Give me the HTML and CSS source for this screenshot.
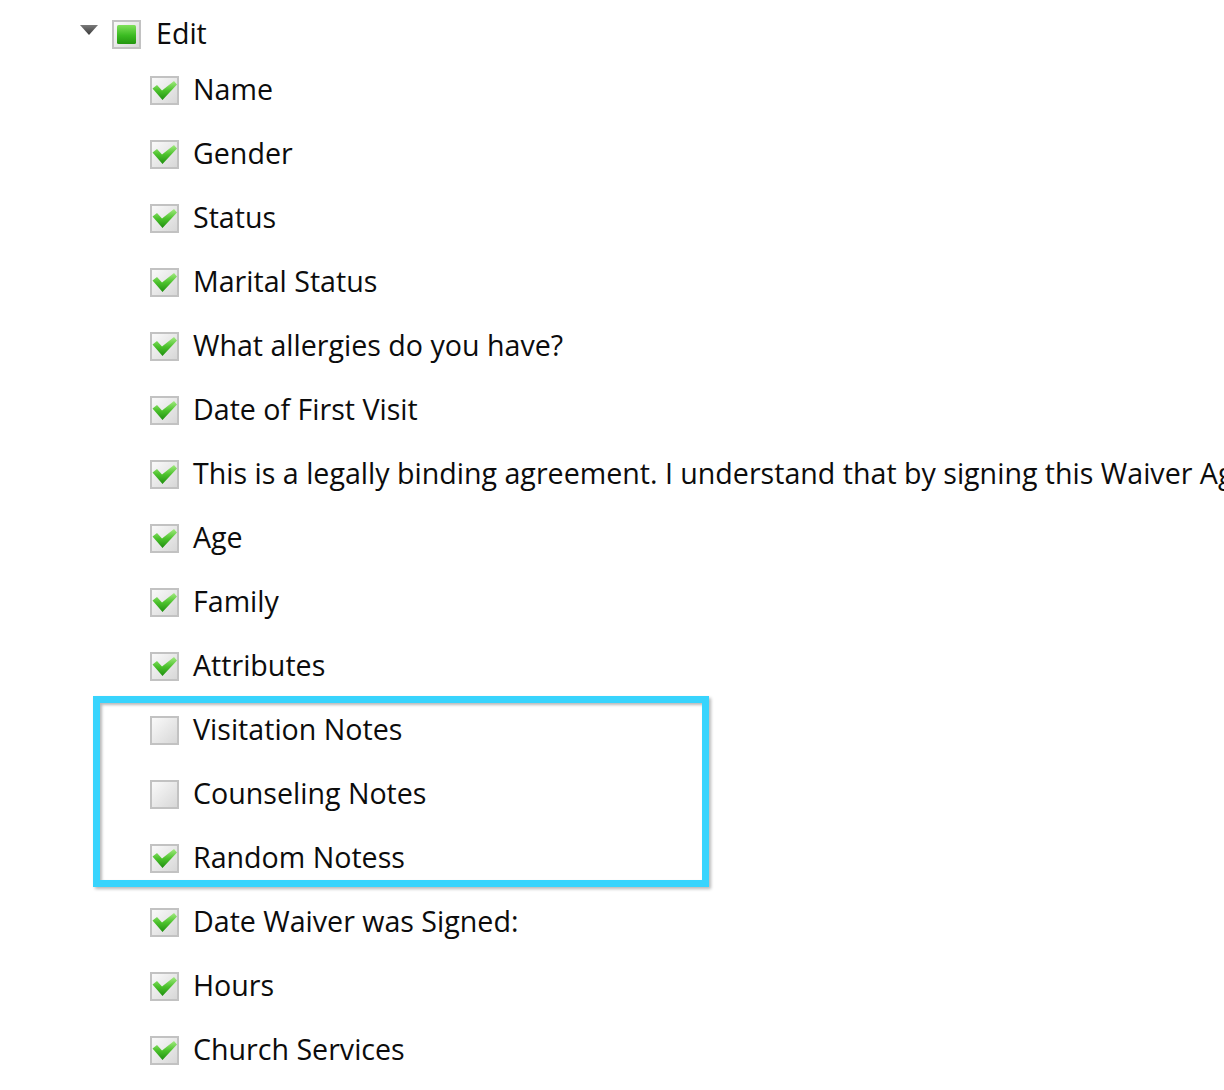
FILE: index.html
```html
<!DOCTYPE html>
<html>
<head>
<meta charset="utf-8">
<link rel="stylesheet" href="styles.css">
</head>
<body>
<svg width="0" height="0" class="defs">
  <defs>
    <linearGradient id="boxbg" x1="0" y1="0" x2="1" y2="1">
      <stop offset="0" stop-color="#fbfbfb"/>
      <stop offset="1" stop-color="#d6d6d6"/>
    </linearGradient>
    <linearGradient id="green" x1="0" y1="0" x2="0" y2="1">
      <stop offset="0" stop-color="#a2ea80"/>
      <stop offset="0.5" stop-color="#4cc22c"/>
      <stop offset="1" stop-color="#1f8f10"/>
    </linearGradient>
    <linearGradient id="greensq" x1="0" y1="0" x2="0" y2="1">
      <stop offset="0" stop-color="#7fe05a"/>
      <stop offset="0.55" stop-color="#3bbb22"/>
      <stop offset="1" stop-color="#23960f"/>
    </linearGradient>
    <linearGradient id="tri" x1="0" y1="0" x2="0" y2="1">
      <stop offset="0" stop-color="#7a7a7a"/>
      <stop offset="1" stop-color="#3a3a3a"/>
    </linearGradient>
    <symbol id="cb-checked" viewBox="0 0 29 29">
      <rect x="1" y="1" width="27" height="27" fill="url(#boxbg)" stroke="#c2c2c2" stroke-width="2"/>
      <path d="M2.5 12.5 L7 9 L12 14.5 L24 5 L27 8.5 L12.5 24 Z" fill="url(#green)"/>
    </symbol>
    <symbol id="cb-empty" viewBox="0 0 29 29">
      <rect x="1" y="1" width="27" height="27" fill="url(#boxbg)" stroke="#c2c2c2" stroke-width="2"/>
    </symbol>
    <symbol id="cb-partial" viewBox="0 0 29 29">
      <rect x="1" y="1" width="27" height="27" fill="url(#boxbg)" stroke="#c2c2c2" stroke-width="2"/>
      <rect x="5" y="5" width="19" height="19" rx="1.5" fill="url(#greensq)"/>
    </symbol>
  </defs>
</svg>

<div class="tree">
  <div class="node-row">
    <svg class="toggle" viewBox="0 0 18 10"><path d="M0 0 H18 L9 10 Z" fill="url(#tri)"/></svg>
    <svg class="cb"><use href="#cb-partial"/></svg>
    <span class="label">Edit</span>
  </div>
  <div class="children">
    <div class="child-row"><svg class="cb"><use href="#cb-checked"/></svg><span class="label">Name</span></div>
    <div class="child-row"><svg class="cb"><use href="#cb-checked"/></svg><span class="label">Gender</span></div>
    <div class="child-row"><svg class="cb"><use href="#cb-checked"/></svg><span class="label">Status</span></div>
    <div class="child-row"><svg class="cb"><use href="#cb-checked"/></svg><span class="label">Marital Status</span></div>
    <div class="child-row"><svg class="cb"><use href="#cb-checked"/></svg><span class="label">What allergies do you have?</span></div>
    <div class="child-row"><svg class="cb"><use href="#cb-checked"/></svg><span class="label">Date of First Visit</span></div>
    <div class="child-row"><svg class="cb"><use href="#cb-checked"/></svg><span class="label">This is a legally binding agreement. I understand that by signing this Waiver Agreement I am giving up certain legal rights.</span></div>
    <div class="child-row"><svg class="cb"><use href="#cb-checked"/></svg><span class="label">Age</span></div>
    <div class="child-row"><svg class="cb"><use href="#cb-checked"/></svg><span class="label">Family</span></div>
    <div class="child-row"><svg class="cb"><use href="#cb-checked"/></svg><span class="label">Attributes</span></div>
    <div class="child-row"><svg class="cb"><use href="#cb-empty"/></svg><span class="label">Visitation Notes</span></div>
    <div class="child-row"><svg class="cb"><use href="#cb-empty"/></svg><span class="label">Counseling Notes</span></div>
    <div class="child-row"><svg class="cb"><use href="#cb-checked"/></svg><span class="label">Random Notess</span></div>
    <div class="child-row"><svg class="cb"><use href="#cb-checked"/></svg><span class="label">Date Waiver was Signed:</span></div>
    <div class="child-row"><svg class="cb"><use href="#cb-checked"/></svg><span class="label">Hours</span></div>
    <div class="child-row"><svg class="cb"><use href="#cb-checked"/></svg><span class="label">Church Services</span></div>
  </div>
</div>
<div class="highlight"></div>
</body>
</html>
```

FILE: styles.css
```css
html, body {
  margin: 0;
  padding: 0;
  background: #ffffff;
  overflow: hidden;
}
body {
  font-family: "Open Sans", "Noto Sans", sans-serif;
  font-size: 28.6px;
  color: #0c0c0c;
  width: 1224px;
  height: 1090px;
  position: relative;
}
.defs {
  position: absolute;
  width: 0;
  height: 0;
}
.tree {
  padding-top: 10px;
  padding-left: 80px;
}
.node-row {
  display: flex;
  align-items: center;
  height: 48px;
  white-space: nowrap;
}
.toggle {
  width: 18px;
  height: 10px;
  margin-right: 14px;
  margin-top: -8px;
}
.node-row .cb {
  margin-right: 15px;
}
.cb {
  width: 29px;
  height: 29px;
  flex: none;
}
.children {
  padding-left: 70px;
}
.child-row {
  display: flex;
  align-items: center;
  height: 64px;
  white-space: nowrap;
}
.child-row .cb {
  margin-right: 14px;
}
.label {
  line-height: 1;
  margin-top: -2px;
}
.highlight {
  position: absolute;
  left: 93px;
  top: 696px;
  width: 602px;
  height: 177px;
  border: 7px solid #38d4fd;
  box-shadow: 2px 2px 3px rgba(0,0,0,0.28), inset 2px 2px 3px rgba(0,0,0,0.28);
}
```
